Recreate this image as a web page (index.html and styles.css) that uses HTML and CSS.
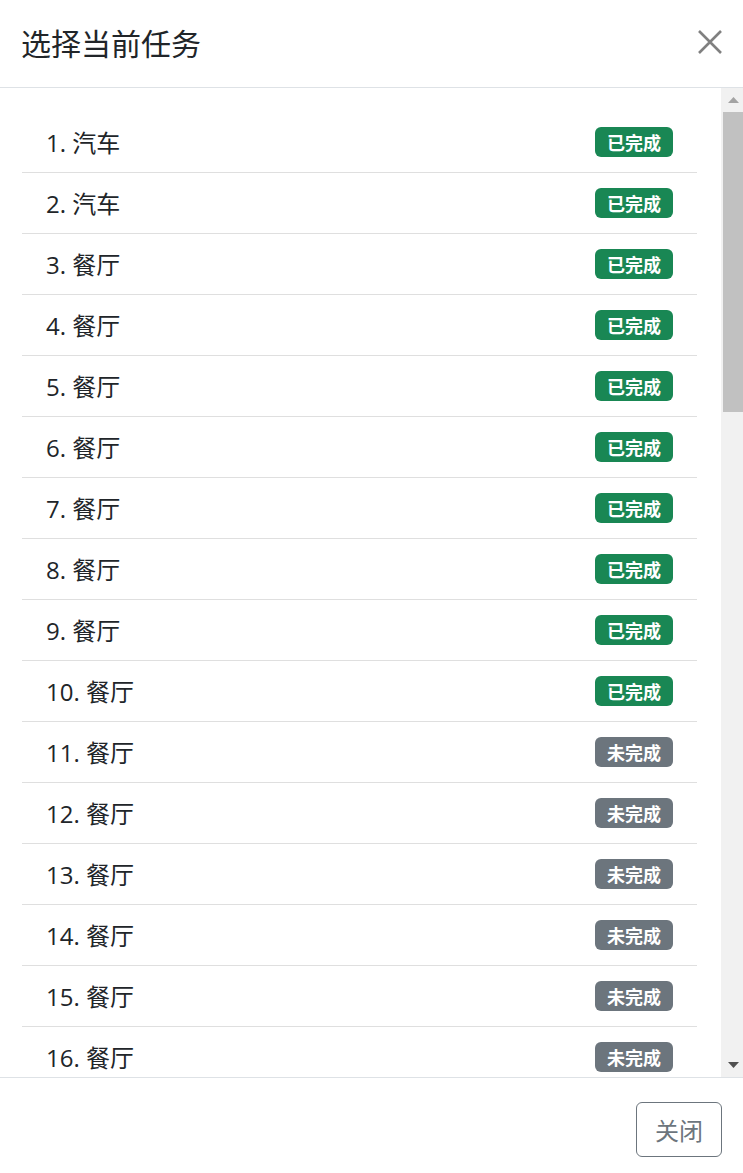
FILE: index.html
```html
<!DOCTYPE html>
<html lang="zh-CN">
<head>
<meta charset="utf-8">
<title>选择当前任务</title>
<link rel="stylesheet" href="styles.css">
</head>
<body>
<div class="modal">
  <div class="modal-header">
    <h5 class="modal-title">选择当前任务</h5>
    <button class="btn-close" type="button" aria-label="Close">
      <svg width="24" height="24" viewBox="0 0 24 24"><path d="M1 1 L23 23 M23 1 L1 23" stroke="#808080" stroke-width="2.6" fill="none"/></svg>
    </button>
  </div>
  <div class="modal-body">
    <div class="scroll-content">
      <ul class="list-group">
        <li class="item"><span>1. 汽车</span><span class="badge done">已完成</span></li>
        <li class="item"><span>2. 汽车</span><span class="badge done">已完成</span></li>
        <li class="item"><span>3. 餐厅</span><span class="badge done">已完成</span></li>
        <li class="item"><span>4. 餐厅</span><span class="badge done">已完成</span></li>
        <li class="item"><span>5. 餐厅</span><span class="badge done">已完成</span></li>
        <li class="item"><span>6. 餐厅</span><span class="badge done">已完成</span></li>
        <li class="item"><span>7. 餐厅</span><span class="badge done">已完成</span></li>
        <li class="item"><span>8. 餐厅</span><span class="badge done">已完成</span></li>
        <li class="item"><span>9. 餐厅</span><span class="badge done">已完成</span></li>
        <li class="item"><span>10. 餐厅</span><span class="badge done">已完成</span></li>
        <li class="item"><span>11. 餐厅</span><span class="badge todo">未完成</span></li>
        <li class="item"><span>12. 餐厅</span><span class="badge todo">未完成</span></li>
        <li class="item"><span>13. 餐厅</span><span class="badge todo">未完成</span></li>
        <li class="item"><span>14. 餐厅</span><span class="badge todo">未完成</span></li>
        <li class="item"><span>15. 餐厅</span><span class="badge todo">未完成</span></li>
        <li class="item"><span>16. 餐厅</span><span class="badge todo">未完成</span></li>
      </ul>
    </div>
    <div class="scrollbar" aria-hidden="true">
      <div class="sb-btn">
        <svg width="11" height="6" viewBox="0 0 11 6"><polygon points="5.5,0 11,6 0,6" fill="#a3a3a3"/></svg>
      </div>
      <div class="sb-track"><div class="sb-thumb"></div></div>
      <div class="sb-btn">
        <svg width="11" height="6" viewBox="0 0 11 6"><polygon points="0,0 11,0 5.5,6" fill="#505050"/></svg>
      </div>
    </div>
  </div>
  <div class="modal-footer">
    <button class="btn-outline" type="button">关闭</button>
  </div>
</div>
</body>
</html>
```

FILE: styles.css
```css
* { box-sizing: border-box; }
html, body { margin: 0; padding: 0; }
body {
  font-family: "Open Sans", "Noto Sans CJK SC", "Liberation Sans", sans-serif;
  font-size: 24px;
  line-height: 36px;
  color: #212529;
  background: #fff;
}
.modal {
  height: 100vh;
  overflow: hidden;
  display: flex;
  flex-direction: column;
}
.modal-header {
  flex: 0 0 88px;
  display: flex;
  align-items: center;
  justify-content: space-between;
  padding: 0 21px 4px 21px;
  border-bottom: 1px solid #dee2e6;
}
.modal-title {
  margin: 0;
  font-family: "Noto Sans CJK SC", sans-serif;
  font-size: 30px;
  line-height: 36px;
  font-weight: 400;
  color: #212529;
}
.btn-close {
  width: 24px;
  height: 24px;
  padding: 0;
  border: 0;
  background: transparent;
  display: flex;
}
.modal-body {
  flex: 0 0 989px;
  display: flex;
  overflow: hidden;
}
.scroll-content {
  flex: 1;
  overflow: hidden;
  padding: 24px 24px 0 22px;
}
.scrollbar {
  flex: 0 0 22px;
  display: flex;
  flex-direction: column;
  background: #f1f1f1;
}
.sb-btn {
  flex: 0 0 24px;
  display: flex;
  align-items: center;
  justify-content: center;
  padding-left: 2px;
}
.sb-track {
  flex: 1;
  display: flex;
  flex-direction: column;
  padding-left: 2px;
}
.sb-thumb {
  height: 300px;
  background: #c1c1c1;
}
.list-group {
  list-style: none;
  margin: 0;
  padding: 0;
}
.item {
  display: flex;
  align-items: center;
  justify-content: space-between;
  padding: 12px 24px;
  height: 61px;
  border-bottom: 1px solid #dfdfdf;
}
.item span:first-child { padding-top: 2px; }
.badge {
  display: inline-block;
  font-family: "Noto Sans CJK SC", sans-serif;
  font-size: 18px;
  font-weight: 700;
  line-height: 18px;
  padding: 6px 12px 6px 12px;
  border-radius: 6px;
  color: #fff;
}
.done { background: #198754; }
.todo { background: #6c757d; }
.modal-footer {
  flex: 0 0 auto;
  display: flex;
  justify-content: flex-end;
  padding: 24px 21px 24px 21px;
  border-top: 1px solid #dee2e6;
}
.btn-outline {
  font-family: "Noto Sans CJK SC", sans-serif;
  font-size: 24px;
  line-height: 36px;
  height: 55px;
  padding: 8px 18px;
  border: 1px solid #6c757d;
  border-radius: 6px;
  color: #6c757d;
  background: #fff;
}
```
